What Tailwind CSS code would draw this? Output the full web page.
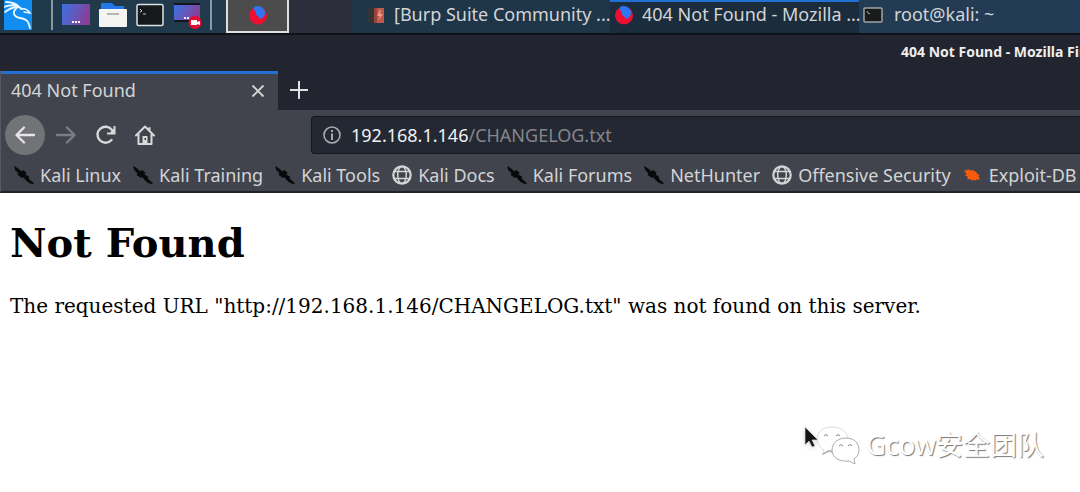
<!DOCTYPE html>
<html lang="en">
<head>
<meta charset="utf-8">
<meta name="viewport" content="width=device-width, initial-scale=1">
<title>404 Not Found</title>
<script src="https://cdn.jsdelivr.net/npm/@tailwindcss/browser@4"></script>
</head>
<body class="flex min-h-screen flex-col overflow-x-hidden bg-white font-['Noto_Sans','Noto_Sans_CJK_SC',sans-serif] text-[#d3d4d6]">
<svg class="absolute h-0 w-0" aria-hidden="true">
  <defs>
    <linearGradient id="wall" x1="0" x2="1" y1="0" y2=".3"><stop stop-color="#3b72df"/><stop offset=".55" stop-color="#6259bd"/><stop offset="1" stop-color="#893f98"/></linearGradient>
  </defs>
  <symbol id="kali" viewBox="0 0 20 20"><path fill="#08090b" stroke="#08090b" stroke-width=".6" d="M.5 1.500 4.500 4 7 6.500l2.500-1L12 7.500l-.5 2.500 3 1.500.5 3 4.500 3.500-1 1-4.500-2-3-3-1-2-2 .5-4-2.500.5-2L1.500 5z"/></symbol>
  <symbol id="globe" viewBox="0 0 20 20"><g fill="none" stroke="#d3d4d6" stroke-width="1.500"><circle cx="10" cy="10" r="8.700" stroke-width="2.200"/><ellipse cx="10" cy="10" rx="4.300" ry="8.500"/><path d="M2.500 6.500h15M2.500 13.500h15"/></g></symbol>
  <symbol id="fox" viewBox="0 0 20 20"><circle cx="10" cy="10.500" r="9" fill="#ed0f32"/><path fill="#2e75f2" d="M6 2c3-2 8-1 10 2.500 2 3 1 6-1 8L12 14c-1-2-2-3-3-3.500C7.500 10 8 8 7.500 6.500L6 5z"/></symbol>
</svg>

<header class="flex h-[35px] shrink-0 items-stretch overflow-hidden border-b-2 border-[#101116] bg-gradient-to-r from-[#20394a] to-[#233b55] text-[18px]">
  <nav aria-label="Launchers" class="flex w-[226px] shrink-0 items-start pl-[4px]">
    <button aria-label="Applications" class="h-[30px] w-[30px] shrink-0">
      <svg viewBox="0 0 30 30" class="h-full w-full"><path fill="#118df2" d="M0 0h28v30H0z"/><g fill="none" stroke="#eaf7ff" stroke-linecap="round"><path stroke-width="1.800" d="M0 7c7-3 14-2 18 2M2 2c6 0 11 2 14 6M1 12c5-4 9-5 13-5M13 8c-5 3-4 9 3 10 7 1 9 4 10 10"/><path stroke-width="1.500" d="M17 9c4-1 7 1 9 4l-6-1"/></g></svg>
    </button>
    <span class="ml-[17px] h-[30px] w-[2px] bg-[#8799a5]"></span>
    <button aria-label="Show desktop" class="ml-[9px] h-[30px] w-[28px] shrink-0"><svg viewBox="0 0 28 30" class="h-full w-full"><path fill="url(#wall)" d="M0 4h28v21H0z"/><path stroke="#f4f4ff" stroke-width="2" stroke-dasharray="2 1" d="M10 22h8"/></svg></button>
    <button aria-label="Files" class="ml-[9px] h-[30px] w-[28px] shrink-0"><svg viewBox="0 0 28 30" class="h-full w-full"><path fill="#2277e8" d="M2 3h11l3 3h9v8H2z"/><rect y="9" width="28" height="18" rx="1" fill="#f4f4f2"/><path stroke="#b6b6b4" stroke-width="2" d="M8 14h12"/></svg></button>
    <button aria-label="Terminal" class="ml-[9px] h-[30px] w-[28px] shrink-0"><svg viewBox="0 0 28 30" class="h-full w-full"><rect x="1" y="4.500" width="26" height="21" rx="1.500" fill="#17181a" stroke="#dce2e5" stroke-width="1.500"/><path fill="none" stroke="#c9ced0" d="m4 9 2 2-2 1M7 14h3"/></svg></button>
    <button aria-label="Screen recorder" class="ml-[10px] h-[30px] w-[28px] shrink-0"><svg viewBox="0 0 28 30" class="h-full w-full"><path fill="#151320" d="M0 3h26v19H0z"/><path fill="url(#wall)" d="M0 5h26v15H0z"/><path stroke="#eee" stroke-width="2" stroke-dasharray="2 1" d="M10 18h6"/><circle cx="21" cy="22.500" r="6.500" fill="#e80b2e"/><path fill="#fff" d="M17 20h6v2l3-1v4l-3-1v1h-6z"/></svg></button>
    <span class="ml-[8px] h-[30px] w-[2px] bg-[#8799a5]"></span>
  </nav>
  <button aria-label="Workspace 1" class="flex w-[63px] shrink-0 items-center justify-center border-2 border-t-0 border-[#dedfdf] bg-[#4c4c4c] pb-[2px]"><svg class="h-[20px] w-[20px]"><use href="#fox"/></svg></button>
  <button aria-label="Workspace 2" class="w-[63px] shrink-0 bg-[#2c2f3b]"></button>
  <button class="flex w-[258px] shrink-0 items-center whitespace-nowrap bg-[#1f3548] pb-[4px] pl-[14px]">
    <svg viewBox="0 0 20 20" class="h-[20px] w-[20px] shrink-0"><path fill="#34343a" d="m1 4 8-2v17l-7-2z"/><path fill="#bd594e" d="M8 3h10v15H8z"/><path fill="#984239" d="M8 3h3v15H8z"/><path fill="#f09a83" d="m14 5-3 6h3l-2 5 5-7h-3l1-4z"/></svg>
    <span class="ml-[8px]">[Burp Suite Community ...</span>
  </button>
  <button class="flex w-[249px] shrink-0 items-center whitespace-nowrap border-t-2 border-[#236fd2] bg-[#1b2c3c] pb-[6px] pl-[4px]"><svg class="h-[20px] w-[20px] shrink-0"><use href="#fox"/></svg><span class="ml-[8px]">404 Not Found - Mozilla ...</span></button>
  <button class="flex min-w-0 flex-1 items-center whitespace-nowrap pb-[4px] pl-[4px]"><svg viewBox="0 0 20 18" class="h-[18px] w-[20px] shrink-0"><rect x="1" y="2" width="18" height="14" rx="1" fill="#191b1b" stroke="#a2a4a4" stroke-width="1.500"/><path fill="none" stroke="#aaa" d="m4 5 1 2 2 1"/></svg><span class="ml-[11px]">root@kali: ~</span></button>
</header>

<div class="flex h-[36px] shrink-0 justify-end overflow-hidden bg-[#22252f]"><div class="w-[179px] whitespace-nowrap pt-[7px] text-[14px] leading-[20px] font-bold text-[#eeeeec]">404 Not Found - Mozilla Firefox</div></div>

<div role="tablist" class="flex h-[39px] shrink-0 border-l border-[#565961] bg-[#22252f]">
  <div class="flex w-[277px] items-center justify-between border-t-3 border-[#236fd2] bg-[#42444d] pr-[13px] pb-[3px] pl-[10px] text-[18px]">
    <button role="tab" aria-selected="true">404 Not Found</button>
    <button aria-label="Close tab"><svg viewBox="0 0 14 14" class="h-[14px] w-[14px]"><path d="m1.500 1.500 11 11m0-11-11 11" stroke="#d5d6d7" stroke-width="1.800"/></svg></button>
  </div>
  <button aria-label="New tab" class="ml-[12px] pb-[2px]"><svg viewBox="0 0 18 18" class="h-[18px] w-[18px]"><path d="M9 0v18M0 9h18" stroke="#e0e1e1" stroke-width="2"/></svg></button>
</div>

<div class="flex h-[50px] shrink-0 items-center border-l border-[#565961] bg-[#42444d] pl-[4px]">
  <button aria-label="Back" class="flex h-[40px] w-[40px] items-center justify-center rounded-full bg-[#727377]"><svg viewBox="0 0 20 20" class="h-[20px] w-[20px]"><path fill="none" stroke="#e6e6e6" stroke-width="2.300" stroke-linecap="round" stroke-linejoin="round" d="M19 10H1.500M9 2.500 1.500 10 9 17.500"/></svg></button>
  <button aria-label="Forward" class="ml-[11px]"><svg viewBox="0 0 20 20" class="h-[20px] w-[20px]"><path fill="none" stroke="#7c7d83" stroke-width="2.300" stroke-linecap="round" stroke-linejoin="round" d="M1 10h17.500M11 2.500l7.500 7.500-7.500 7.500"/></svg></button>
  <button aria-label="Reload" class="ml-[20px]"><svg viewBox="0 0 20 20" class="h-[20px] w-[20px]"><path fill="none" stroke="#d8d9da" stroke-width="2.400" stroke-linecap="round" d="M15.500 15A8 8 0 1 1 16 5"/><path fill="#d8d9da" d="M19.500 1v8.500H11V7.500h3L17.500 4V1z"/></svg></button>
  <button aria-label="Home" class="ml-[19px]"><svg viewBox="0 0 20 20" class="h-[20px] w-[20px]"><g fill="none" stroke="#d8d9da" stroke-width="2" stroke-linejoin="round" stroke-linecap="round"><path d="m1 10.500 9-9 9 9M3.500 9v10h13V9M14.500 3v3"/></g><path fill="#d8d9da" d="M7.500 11h5v8h-5z"/><path fill="#42444d" d="M9.500 13h1.500v2H9.500z"/></svg></button>
  <div class="ml-[156px] flex h-[38px] flex-1 items-center rounded-l-[4px] border border-r-0 border-[#15171e] bg-[#242833] pl-[10px] text-[18px]">
    <svg viewBox="0 0 20 20" class="h-[20px] w-[20px] shrink-0"><circle cx="10" cy="10" r="8" fill="none" stroke="#aaabae" stroke-width="1.600"/><path stroke="#aaabae" stroke-width="2" d="M10 8.500V15M10 5v2"/></svg>
    <div role="textbox" aria-label="Address" contenteditable="true" spellcheck="false" class="ml-[9px] flex-1 whitespace-nowrap outline-none"><span class="text-[#f0f1f2]">192.168.1.146</span><span class="text-[#84868c]">/CHANGELOG.txt</span></div>
  </div>
</div>

<nav aria-label="Bookmarks" class="flex h-[33px] shrink-0 items-center gap-[12px] overflow-hidden border-b-2 border-l border-b-[#22232a] border-l-[#565961] bg-[#42444d] pb-px pl-[13px] text-[18px] whitespace-nowrap">
  <a href="#" class="flex shrink-0 items-center gap-[6px]"><svg class="h-[20px] w-[20px]"><use href="#kali"/></svg>Kali Linux</a>
  <a href="#" class="flex shrink-0 items-center gap-[6px]"><svg class="h-[20px] w-[20px]"><use href="#kali"/></svg>Kali Training</a>
  <a href="#" class="flex shrink-0 items-center gap-[6px]"><svg class="h-[20px] w-[20px]"><use href="#kali"/></svg>Kali Tools</a>
  <a href="#" class="flex shrink-0 items-center gap-[6px]"><svg class="h-[20px] w-[20px]"><use href="#globe"/></svg>Kali Docs</a>
  <a href="#" class="flex shrink-0 items-center gap-[6px]"><svg class="h-[20px] w-[20px]"><use href="#kali"/></svg>Kali Forums</a>
  <a href="#" class="flex shrink-0 items-center gap-[6px]"><svg class="h-[20px] w-[20px]"><use href="#kali"/></svg>NetHunter</a>
  <a href="#" class="flex shrink-0 items-center gap-[6px]"><svg class="h-[20px] w-[20px]"><use href="#globe"/></svg>Offensive Security</a>
  <a href="#" class="flex shrink-0 items-center gap-[6px]"><svg viewBox="0 0 20 20" class="h-[20px] w-[20px]"><path fill="#f85b0b" d="m1 5 3 .5 1-1.500 2 1.500c3-1 6 .5 7.500 3.500l2 1-1 1 1.500 4-3-1-1 1.500-2-.5-2 .5-2-1.500-3 .5 1-2.500-3-1.500 1.500-1.500z"/></svg>Exploit-DB</a>
</nav>

<main class="relative flex-1 pt-[26px] pl-[10px] font-['DejaVu_Serif',serif] text-black">
  <h1 class="text-[40px] leading-[48px] font-bold">Not Found</h1>
  <p class="mt-[25px] text-[20px] leading-[28px]">The requested URL "http://192.168.1.146/CHANGELOG.txt" was not found on this server.</p>
  <div class="absolute top-[232px] right-[36px] flex items-center gap-[6px] font-['Noto_Sans','Noto_Sans_CJK_SC',sans-serif] text-[27px] leading-[40px] whitespace-nowrap text-white">
    <svg viewBox="0 0 44 38" class="h-[38px] w-[44px]" aria-hidden="true"><g fill="#fff" stroke="#aaa" stroke-width="1"><path stroke="#ddd" d="M16 1C7 1 1 6 1 13c0 5 3 8 7 11l-2 5 6-3c11 2 20-3 20-13C32 6 25 1 16 1z"/><path d="M30 12c-8 0-14 5-14 12 0 8 8 12 17 11l6 3-1-5c3-2 5-5 5-9 0-7-5-12-13-12z"/><path fill="none" stroke="#888" d="M8 10q2-3 4 0M20 10q2-3 4 0M23 20q2-3 4 0M32 20q2-3 4 0M7 28l5-3h4"/></g></svg>
    <span class="[text-shadow:1px_1px_1px_#777]">Gcow安全团队</span>
  </div>
  <svg viewBox="0 0 16 24" class="absolute top-[233px] left-[804px] h-[24px] w-[16px] drop-shadow-sm" aria-hidden="true"><path fill="#141414" stroke="#ddd" stroke-width=".7" d="M1 1v18l4-4 3 6 3-1-3-6h6z"/></svg>
</main>
</body>
</html>
